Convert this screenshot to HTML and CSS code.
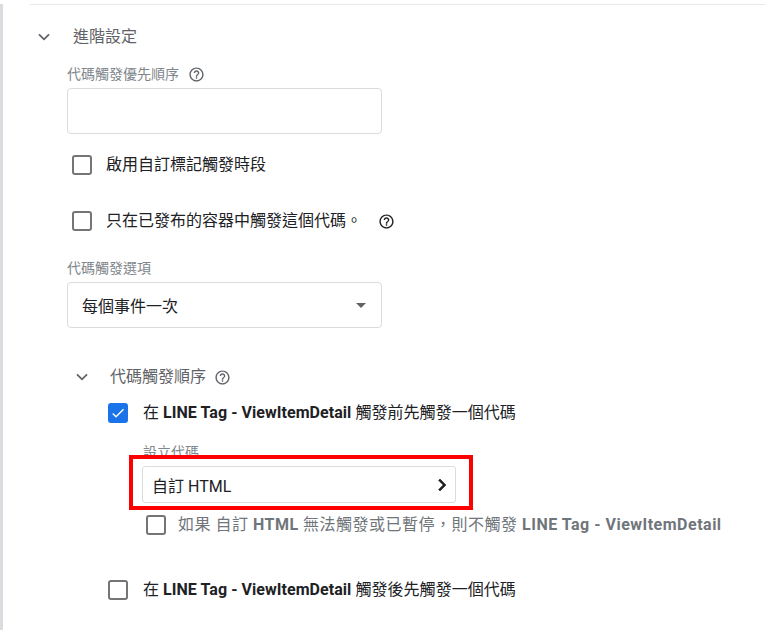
FILE: index.html
```html
<!DOCTYPE html>
<html lang="zh-Hant">
<head>
<meta charset="utf-8">
<link rel="stylesheet" href="styles.css">
</head>
<body>
<div class="page">
  <div class="panel">
    <div class="divider"></div>
    <div class="section-head">
      <svg class="chev" width="12" height="8" viewBox="0 0 12 8"><path d="M1 1.3L6 6.3L11 1.3" fill="none" stroke="#5f6368" stroke-width="1.8"/></svg>
      <span class="section-title">進階設定</span>
    </div>
    <div class="form">
      <div class="label label-first">代碼觸發優先順序
        <svg class="help" width="17" height="17" viewBox="0 0 24 24"><path fill="#5f6368" d="M11 18h2v-2h-2v2zm1-16C6.48 2 2 6.48 2 12s4.48 10 10 10 10-4.48 10-10S17.52 2 12 2zm0 18c-4.41 0-8-3.590-8-8s3.59-8 8-8 8 3.59 8 8-3.59 8-8 8zm0-14c-2.21 0-4 1.79-4 4h2c0-1.1.9-2 2-2s2 .9 2 2c0 2-3 1.75-3 5h2c0-2.25 3-2.5 3-5 0-2.21-1.79-4-4-4z"/></svg>
      </div>
      <div class="field"></div>

      <div class="check check-1">
        <span class="box"></span>
        <span class="check-text">啟用自訂標記觸發時段</span>
      </div>
      <div class="check check-2">
        <span class="box"></span>
        <span class="check-text">只在已發布的容器中觸發這個代碼。</span>
        <svg class="help help-dark" width="17" height="17" viewBox="0 0 24 24"><path fill="#202124" d="M11 18h2v-2h-2v2zm1-16C6.48 2 2 6.48 2 12s4.48 10 10 10 10-4.48 10-10S17.52 2 12 2zm0 18c-4.41 0-8-3.59-8-8s3.59-8 8-8 8 3.59 8 8-3.59 8-8 8zm0-14c-2.21 0-4 1.79-4 4h2c0-1.1.9-2 2-2s2 .9 2 2c0 2-3 1.75-3 5h2c0-2.25 3-2.5 3-5 0-2.21-1.79-4-4-4z"/></svg>
      </div>

      <div class="label label-second">代碼觸發選項</div>
      <div class="field select">
        <span>每個事件一次</span>
        <svg width="24" height="24" viewBox="0 0 24 24"><path fill="#5f6368" d="M7 10l5 5 5-5z"/></svg>
      </div>

      <div class="sub-head">
        <svg class="chev" width="12" height="8" viewBox="0 0 12 8"><path d="M1 1.3L6 6.3L11 1.3" fill="none" stroke="#5f6368" stroke-width="1.8"/></svg>
        <span class="section-title">代碼觸發順序</span>
        <svg class="help" width="17" height="17" viewBox="0 0 24 24"><path fill="#5f6368" d="M11 18h2v-2h-2v2zm1-16C6.48 2 2 6.48 2 12s4.48 10 10 10 10-4.48 10-10S17.52 2 12 2zm0 18c-4.41 0-8-3.59-8-8s3.59-8 8-8 8 3.59 8 8-3.59 8-8 8zm0-14c-2.21 0-4 1.79-4 4h2c0-1.1.9-2 2-2s2 .9 2 2c0 2-3 1.75-3 5h2c0-2.25 3-2.5 3-5 0-2.21-1.79-4-4-4z"/></svg>
      </div>

      <div class="sub-body">
        <div class="check check-on">
          <span class="box box-checked">
            <svg width="16" height="16" viewBox="0 0 24 24"><path fill="#fff" d="M9 16.17L4.83 12l-1.42 1.41L9 19 21 7l-1.41-1.41z"/></svg>
          </span>
          <span class="check-text">在 <b>LINE Tag - ViewItemDetail</b> 觸發前先觸發一個代碼</span>
        </div>

        <div class="label label-setup">設立代碼</div>
        <div class="setup-wrap">
          <div class="setup-field">
            <span>自訂 HTML</span>
            <svg width="24" height="24" viewBox="0 0 24 24"><path fill="#202124" d="M10 6L8.59 7.41 13.17 12l-4.58 4.59L10 18l6-6z"/></svg>
          </div>
          <div class="highlight"></div>
        </div>

        <div class="check check-3">
          <span class="box"></span>
          <span class="check-text muted">如果 自訂 <b>HTML</b> 無法觸發或已暫停，則不觸發 <b>LINE Tag - ViewItemDetail</b></span>
        </div>

        <div class="check check-4">
          <span class="box"></span>
          <span class="check-text">在 <b>LINE Tag - ViewItemDetail</b> 觸發後先觸發一個代碼</span>
        </div>
      </div>
    </div>
  </div>
</div>
</body>
</html>
```

FILE: styles.css
```css
* { box-sizing: border-box; }
html, body {
  margin: 0;
  padding: 0;
  background: #fff;
}
body {
  font-family: Roboto, "Noto Sans CJK TC", sans-serif;
  color: #202124;
  width: 765px;
  height: 630px;
  overflow: hidden;
}
.page {
  border-left: 3px solid #dadce0;
  height: 630px;
  padding-left: 27px;
}
.divider {
  margin-top: 4px;
  height: 1px;
  background: #e8eaed;
}
.section-head {
  margin-top: 20px;
  height: 24px;
  display: flex;
  align-items: center;
}
.section-head .chev {
  margin-left: 8px;
  margin-right: 23px;
}
.section-title {
  font-size: 16px;
  line-height: 24px;
  color: #5f6368;
}
.form {
  padding-left: 37px;
}
.label {
  font-size: 14px;
  line-height: 20px;
  height: 20px;
  color: #80868b;
  display: flex;
  align-items: center;
}
.label .help { margin-left: 9px; }
.label-first { margin-top: 15px; }
.label-second { margin-top: 25px; }
.field {
  margin-top: 4px;
  width: 315px;
  height: 46px;
  border: 1px solid #dadce0;
  border-radius: 4px;
}
.select {
  display: flex;
  align-items: center;
  justify-content: space-between;
  padding: 0 8px 0 14px;
  font-size: 16px;
  color: #202124;
}
.check {
  display: flex;
  align-items: center;
  height: 24px;
  font-size: 16px;
  line-height: 24px;
}
.box {
  width: 20px;
  height: 20px;
  border: 2px solid #757575;
  border-radius: 3px;
  flex: none;
  display: flex;
  align-items: center;
  justify-content: center;
}
.box-checked {
  background: #1a73e8;
  border-color: #1a73e8;
}
.check-text { white-space: nowrap; }
.check-text b { font-weight: 700; }
.check-1 { margin-top: 19px; }
.check-2 { margin-top: 32px; }
.check-1 .box, .check-2 .box { margin-left: 5px; margin-right: 14px; }
.check-2 .help { margin-left: 16px; }
.sub-head {
  margin-top: 37px;
  height: 24px;
  display: flex;
  align-items: center;
}
.sub-head .chev {
  margin-left: 9px;
  margin-right: 22px;
}
.sub-head .help { margin-left: 8px; }
.sub-body {
  padding-left: 41px;
}
.check-on { margin-top: 12px; }
.check-on .box, .check-4 .box { margin-right: 15px; }
.check-on .check-text, .check-4 .check-text { letter-spacing: 0.05px; }
.label-setup {
  margin-top: 17px;
  padding-left: 35px;
}
.setup-wrap {
  position: relative;
  margin-top: 4px;
  margin-left: 34px;
  width: 314px;
}
.setup-field {
  height: 37px;
  border: 1px solid #dadce0;
  border-radius: 3px;
  display: flex;
  align-items: center;
  justify-content: space-between;
  padding: 0 1px 0 9px;
  font-size: 16px;
  color: #202124;
}
.setup-field svg path { stroke: #202124; stroke-width: 0.6; }
.highlight {
  position: absolute;
  left: -13px;
  top: -11px;
  width: 344px;
  height: 55px;
  border: 4px solid #ff0000;
}
.check-3 { margin-top: 10px; }
.check-3 .box { margin-left: 38px; margin-right: 12px; }
.muted { color: #70757a; letter-spacing: 0.5px; }
.check-4 { margin-top: 41px; }
```
